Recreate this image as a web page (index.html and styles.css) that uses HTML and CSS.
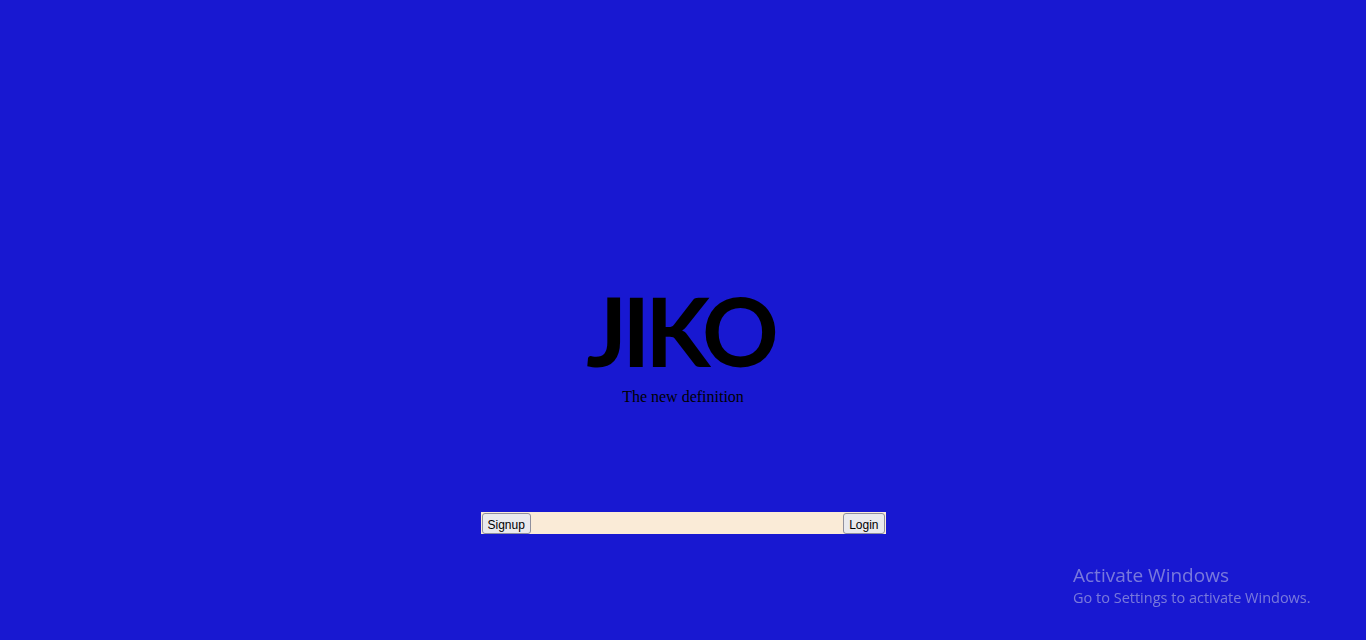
FILE: index.html
```html
<!DOCTYPE html>
<html>
<head>
<meta charset="utf-8">
<link rel="stylesheet" href="styles.css">
</head>
<body>
<main class="page">
  <section class="hero">
    <h1 class="logo">JIKO</h1>
    <p class="tagline">The new definition</p>
  </section>
  <nav class="bar">
    <button class="btn">Signup</button>
    <button class="btn">Login</button>
  </nav>
</main>
<div class="watermark">
  <div class="wm-title">Activate Windows</div>
  <div class="wm-sub">Go to Settings to activate Windows.</div>
</div>
</body>
</html>
```
FILE: styles.css
```css
html, body {
  margin: 0;
  padding: 0;
  height: 100%;
  background: #1818d1;
}
.page {
  display: flex;
  flex-direction: column;
  align-items: center;
  padding-top: 273px;
}
.hero {
  display: flex;
  flex-direction: column;
  align-items: center;
}
.logo {
  margin: 0 0 0 -6px;
  font-family: Lato, "Open Sans", sans-serif;
  font-weight: 700;
  font-size: 95px;
  line-height: 114px;
  letter-spacing: -5px;
  color: #000;
}
.tagline {
  margin: 1px 0 0;
  font-family: "Liberation Serif", serif;
  font-size: 16px;
  line-height: 18px;
  color: #000;
}
.bar {
  margin-top: 106px;
  width: 405px;
  height: 22px;
  background: #faebd7;
  display: flex;
  justify-content: space-between;
  align-items: flex-end;
}
.btn {
  font-family: "Liberation Sans", Arial, sans-serif;
  font-size: 12px;
  height: 21px;
  padding: 2px 5px 0;
  background: #e9e9ed;
  border: 1px solid #8f8f9d;
  border-radius: 3px;
  color: #000;
  margin: 0 1px;
}
.watermark {
  position: fixed;
  left: 1073px;
  top: 563px;
  font-family: "Open Sans", "Noto Sans", sans-serif;
  color: rgba(200, 200, 230, 0.55);
}
.wm-title {
  font-size: 19px;
  line-height: 25px;
}
.wm-sub {
  font-size: 14.5px;
  line-height: 20px;
}
```
